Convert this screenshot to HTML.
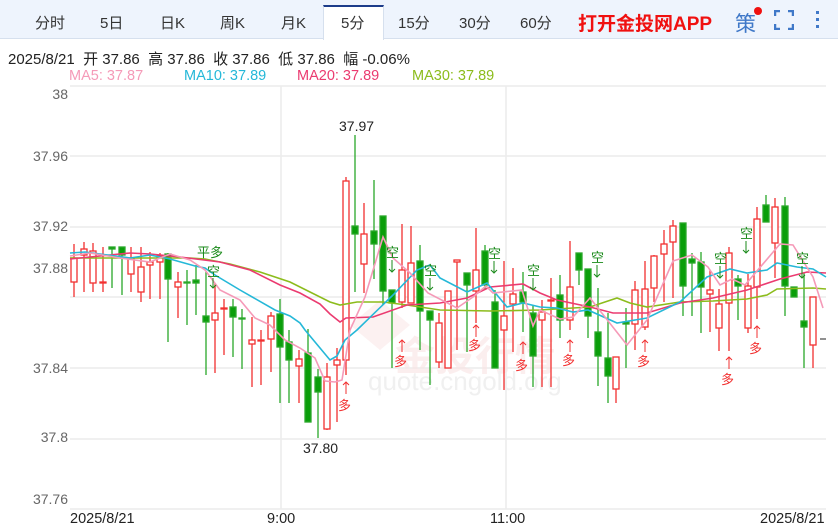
<!DOCTYPE html>
<html><head><meta charset="utf-8"><style>
*{margin:0;padding:0;box-sizing:border-box}
body{width:838px;height:529px;overflow:hidden;background:#fff;font-family:"Liberation Sans","Noto Sans CJK SC",sans-serif;position:relative}
.bar{position:absolute;left:0;top:0;width:838px;height:39px;background:#eef4fd;border-bottom:1px solid #d6e0ee}
.t{position:absolute;top:12px;font-size:15px;color:#333}
.act{position:absolute;left:323px;top:5px;width:61px;height:35px;background:#fff;border-top:2px solid #1d3c8a;border-left:1px solid #d6e0ee;border-right:1px solid #d6e0ee}
.app{position:absolute;left:578px;top:9px;font-size:19px;font-weight:bold;color:#f01010}
.info{position:absolute;left:8px;top:48px;font-size:15px;color:#222;white-space:pre}
.ma{position:absolute;top:68px;font-size:14.5px}
.yl{position:absolute;left:0;width:68px;text-align:right;font-size:14px;color:#666}
.xl{position:absolute;top:511px;font-size:14.5px;color:#222}
</style></head><body>
<div class="bar"></div>
<div class="act"></div>
<span class="t" style="left:35px">分时</span>
<span class="t" style="left:100px">5日</span>
<span class="t" style="left:160px">日K</span>
<span class="t" style="left:220px">周K</span>
<span class="t" style="left:281px">月K</span>
<span class="t" style="left:341px">5分</span>
<span class="t" style="left:398px">15分</span>
<span class="t" style="left:459px">30分</span>
<span class="t" style="left:520px">60分</span>
<span class="app">打开金投网APP</span>
<span style="position:absolute;left:735px;top:8px;font-size:21px;color:#3f78c8">策</span>
<div style="position:absolute;left:754px;top:7px;width:8px;height:8px;border-radius:50%;background:#f01010"></div>
<svg style="position:absolute;left:774px;top:10px" width="20" height="20"><path d="M1 6V1h5M14 1h5v5M19 14v5h-5M6 19H1v-5" fill="none" stroke="#3f78c8" stroke-width="2.5"/></svg>
<svg style="position:absolute;left:815px;top:10px" width="6" height="20"><rect x="1" y="1" width="3" height="3" fill="#3f78c8"/><rect x="1" y="8" width="3" height="3" fill="#3f78c8"/><rect x="1" y="15" width="3" height="3" fill="#3f78c8"/></svg>
<div class="info">2025/8/21  开 37.86  高 37.86  收 37.86  低 37.86  幅 -0.06%</div>
<span class="ma" style="left:69px;color:#f59ab8">MA5: 37.87</span>
<span class="ma" style="left:184px;color:#25b8d8">MA10: 37.89</span>
<span class="ma" style="left:297px;color:#eb3b70">MA20: 37.89</span>
<span class="ma" style="left:412px;color:#8cbc1c">MA30: 37.89</span>
<div class="yl" style="top:86px">38</div>
<div class="yl" style="top:148px">37.96</div>
<div class="yl" style="top:218px">37.92</div>
<div class="yl" style="top:260px">37.88</div>
<div class="yl" style="top:360px">37.84</div>
<div class="yl" style="top:429px">37.8</div>
<div class="yl" style="top:491px">37.76</div>
<span class="xl" style="left:70px">2025/8/21</span>
<span class="xl" style="left:267px">9:00</span>
<span class="xl" style="left:490px">11:00</span>
<span class="xl" style="left:760px">2025/8/21</span>
<svg style="position:absolute;left:0;top:0" width="838" height="529">
<g stroke="#ececec" stroke-width="1.5">
<line x1="70" y1="86" x2="826" y2="86"/><line x1="70" y1="156" x2="826" y2="156"/><line x1="70" y1="227" x2="826" y2="227"/><line x1="70" y1="297" x2="826" y2="297"/><line x1="70" y1="368" x2="826" y2="368"/><line x1="70" y1="439" x2="826" y2="439"/><line x1="70" y1="509" x2="826" y2="509"/>
<line x1="281" y1="86" x2="281" y2="509"/><line x1="506" y1="86" x2="506" y2="509"/>
</g>
<g fill="#f9e4e4" opacity="0.6" font-size="40" font-weight="bold"><text x="395" y="370">金投行情</text></g>
<path d="M350 325l30 -25 30 25 -30 25z" fill="#f9e4e4" opacity="0.5"/>
<text x="368" y="390" font-size="26" fill="#f0f0f0">quote.cngold.org</text>
<g stroke="#f23030" stroke-width="1.3" fill="#fff">
<line x1="74" y1="244" x2="74" y2="297"/><rect x="71" y="258" width="6" height="24"/>
<line x1="84" y1="242" x2="84" y2="292"/><rect x="81" y="249" width="6" height="6"/>
<line x1="93" y1="243" x2="93" y2="292"/><rect x="90" y="251" width="6" height="32"/>
<line x1="103" y1="247" x2="103" y2="292"/><rect x="100" y="282" width="6" height="1"/>
<line x1="131" y1="247" x2="131" y2="292"/><rect x="128" y="258" width="6" height="16"/>
<line x1="141" y1="247" x2="141" y2="302"/><rect x="138" y="267" width="6" height="25"/>
<line x1="150" y1="252" x2="150" y2="299"/><rect x="147" y="262" width="6" height="3"/>
<line x1="160" y1="253" x2="160" y2="299"/><rect x="157" y="256" width="6" height="6"/>
<line x1="178" y1="272" x2="178" y2="318"/><rect x="175" y="282" width="6" height="5"/>
<line x1="215" y1="283" x2="215" y2="373"/><rect x="212" y="313" width="6" height="7"/>
<line x1="224" y1="299" x2="224" y2="355"/><rect x="221" y="308" width="6" height="1"/>
<line x1="252" y1="317" x2="252" y2="387"/><rect x="249" y="340" width="6" height="4"/>
<line x1="261" y1="330" x2="261" y2="385"/><rect x="258" y="340" width="6" height="1"/>
<line x1="271" y1="312" x2="271" y2="372"/><rect x="268" y="316" width="6" height="23"/>
<line x1="299" y1="350" x2="299" y2="403"/><rect x="296" y="359" width="6" height="7"/>
<line x1="327" y1="363" x2="327" y2="430"/><rect x="324" y="377" width="6" height="52"/>
<line x1="337" y1="348" x2="337" y2="422"/><rect x="334" y="360" width="6" height="5"/>
<line x1="346" y1="177" x2="346" y2="375"/><rect x="343" y="181" width="6" height="179"/>
<line x1="364" y1="203" x2="364" y2="293"/><rect x="361" y="234" width="6" height="30"/>
<line x1="402" y1="224" x2="402" y2="308"/><rect x="399" y="270" width="6" height="32"/>
<line x1="411" y1="226" x2="411" y2="303"/><rect x="408" y="263" width="6" height="40"/>
<line x1="439" y1="313" x2="439" y2="368"/><rect x="436" y="323" width="6" height="39"/>
<line x1="448" y1="291" x2="448" y2="368"/><rect x="445" y="291" width="6" height="77"/>
<line x1="457" y1="260" x2="457" y2="350"/><rect x="454" y="260" width="6" height="2"/>
<line x1="476" y1="228" x2="476" y2="323"/><rect x="473" y="270" width="6" height="21"/>
<line x1="504" y1="261" x2="504" y2="390"/><rect x="501" y="316" width="6" height="14"/>
<line x1="513" y1="268" x2="513" y2="352"/><rect x="510" y="294" width="6" height="10"/>
<line x1="542" y1="300" x2="542" y2="387"/><rect x="539" y="312" width="6" height="8"/>
<line x1="551" y1="278" x2="551" y2="387"/><rect x="548" y="300" width="6" height="1"/>
<line x1="570" y1="241" x2="570" y2="330"/><rect x="567" y="287" width="6" height="33"/>
<line x1="616" y1="357" x2="616" y2="403"/><rect x="613" y="357" width="6" height="32"/>
<line x1="635" y1="281" x2="635" y2="350"/><rect x="632" y="290" width="6" height="34"/>
<line x1="645" y1="261" x2="645" y2="330"/><rect x="642" y="289" width="6" height="38"/>
<line x1="654" y1="255" x2="654" y2="302"/><rect x="651" y="256" width="6" height="32"/>
<line x1="664" y1="230" x2="664" y2="302"/><rect x="661" y="244" width="6" height="10"/>
<line x1="673" y1="220" x2="673" y2="298"/><rect x="670" y="226" width="6" height="16"/>
<line x1="710" y1="270" x2="710" y2="332"/><rect x="707" y="290" width="6" height="4"/>
<line x1="719" y1="289" x2="719" y2="351"/><rect x="716" y="304" width="6" height="24"/>
<line x1="729" y1="247" x2="729" y2="351"/><rect x="726" y="253" width="6" height="50"/>
<line x1="748" y1="274" x2="748" y2="333"/><rect x="745" y="286" width="6" height="42"/>
<line x1="757" y1="207" x2="757" y2="319"/><rect x="754" y="219" width="6" height="68"/>
<line x1="775" y1="198" x2="775" y2="278"/><rect x="772" y="207" width="6" height="36"/>
<line x1="813" y1="297" x2="813" y2="368"/><rect x="810" y="297" width="6" height="48"/>
</g>
<g stroke="#2aa82a" stroke-width="1.3" fill="#0a9e0a">
<line x1="112" y1="247" x2="112" y2="288"/><rect x="109" y="247" width="6" height="2"/>
<line x1="122" y1="247" x2="122" y2="295"/><rect x="119" y="247" width="6" height="8"/>
<line x1="168" y1="253" x2="168" y2="342"/><rect x="165" y="254" width="6" height="25"/>
<line x1="187" y1="270" x2="187" y2="325"/><rect x="184" y="282" width="6" height="1"/>
<line x1="196" y1="265" x2="196" y2="315"/><rect x="193" y="280" width="6" height="3"/>
<line x1="206" y1="272" x2="206" y2="375"/><rect x="203" y="316" width="6" height="6"/>
<line x1="233" y1="299" x2="233" y2="357"/><rect x="230" y="307" width="6" height="10"/>
<line x1="242" y1="309" x2="242" y2="369"/><rect x="239" y="318" width="6" height="1"/>
<line x1="280" y1="299" x2="280" y2="403"/><rect x="277" y="314" width="6" height="33"/>
<line x1="289" y1="330" x2="289" y2="403"/><rect x="286" y="342" width="6" height="18"/>
<line x1="308" y1="329" x2="308" y2="422"/><rect x="305" y="353" width="6" height="69"/>
<line x1="318" y1="369" x2="318" y2="438"/><rect x="315" y="377" width="6" height="15"/>
<line x1="355" y1="135" x2="355" y2="292"/><rect x="352" y="226" width="6" height="8"/>
<line x1="374" y1="180" x2="374" y2="279"/><rect x="371" y="231" width="6" height="13"/>
<line x1="383" y1="216" x2="383" y2="305"/><rect x="380" y="216" width="6" height="75"/>
<line x1="392" y1="290" x2="392" y2="368"/><rect x="389" y="290" width="6" height="13"/>
<line x1="420" y1="245" x2="420" y2="350"/><rect x="417" y="261" width="6" height="50"/>
<line x1="430" y1="311" x2="430" y2="385"/><rect x="427" y="311" width="6" height="9"/>
<line x1="467" y1="273" x2="467" y2="352"/><rect x="464" y="273" width="6" height="12"/>
<line x1="485" y1="245" x2="485" y2="290"/><rect x="482" y="251" width="6" height="34"/>
<line x1="495" y1="290" x2="495" y2="368"/><rect x="492" y="302" width="6" height="66"/>
<line x1="523" y1="272" x2="523" y2="332"/><rect x="520" y="292" width="6" height="10"/>
<line x1="533" y1="305" x2="533" y2="387"/><rect x="530" y="313" width="6" height="43"/>
<line x1="560" y1="275" x2="560" y2="338"/><rect x="557" y="295" width="6" height="25"/>
<line x1="579" y1="253" x2="579" y2="285"/><rect x="576" y="253" width="6" height="17"/>
<line x1="588" y1="269" x2="588" y2="338"/><rect x="585" y="269" width="6" height="47"/>
<line x1="598" y1="288" x2="598" y2="386"/><rect x="595" y="332" width="6" height="24"/>
<line x1="608" y1="313" x2="608" y2="403"/><rect x="605" y="358" width="6" height="18"/>
<line x1="626" y1="308" x2="626" y2="368"/><rect x="623" y="322" width="6" height="2"/>
<line x1="683" y1="223" x2="683" y2="316"/><rect x="680" y="223" width="6" height="63"/>
<line x1="692" y1="253" x2="692" y2="316"/><rect x="689" y="259" width="6" height="4"/>
<line x1="701" y1="252" x2="701" y2="333"/><rect x="698" y="262" width="6" height="25"/>
<line x1="738" y1="275" x2="738" y2="320"/><rect x="735" y="279" width="6" height="7"/>
<line x1="766" y1="195" x2="766" y2="222"/><rect x="763" y="205" width="6" height="17"/>
<line x1="785" y1="197" x2="785" y2="316"/><rect x="782" y="206" width="6" height="80"/>
<line x1="794" y1="287" x2="794" y2="297"/><rect x="791" y="287" width="6" height="10"/>
<line x1="804" y1="273" x2="804" y2="368"/><rect x="801" y="321" width="6" height="6"/>
</g>
<line x1="820" y1="339" x2="826" y2="339" stroke="#222"/>
<g fill="none" stroke-width="1.6">
<polyline stroke="#8cbc1c" points="70,258 130,258 190,258 205,259 230,264 260,272 290,282 330,302 340,305 357,302 383,302 407,305 440,310 490,311 540,310 573,308 590,307 617,298 630,303 647,307 680,302 713,301 747,299 767,295 777,289 813,288 826,289"/>
<polyline stroke="#eb3b70" points="70,259 100,256 130,253 150,254 180,257 220,262 250,270 280,285 300,293 320,304 330,314 340,322 346,318 373,317 407,305 440,303 467,298 490,287 523,284 540,293 557,300 590,307 613,313 647,313 680,303 713,298 747,290 780,279 807,272 826,273"/>
<polyline stroke="#25b8d8" points="70,253 85,252 100,254 130,258 150,255 170,259 195,266 205,268 215,275 240,290 275,310 290,316 300,323 305,330 330,360 337,356 345,340 357,330 393,295 417,270 430,265 440,278 467,292 487,283 507,307 523,303 540,307 557,308 573,312 588,310 617,323 647,318 680,302 707,277 730,269 747,273 767,270 777,263 797,267 813,269 826,277"/>
<polyline stroke="#f59ab8" points="70,256 90,253 120,258 150,262 170,254 190,260 205,270 220,290 240,300 255,318 270,325 285,340 300,348 315,358 325,381 335,382 342,380 350,330 365,297 383,237 393,258 410,273 428,293 457,308 473,297 486,286 493,293 522,290 533,326 540,310 560,319 573,317 590,298 627,345 647,320 673,261 692,255 708,267 720,285 732,279 745,285 780,244 793,245 813,277 823,308"/>
</g>
<g font-size="13" fill="#1a8a1a" font-family="Liberation Sans,Noto Sans CJK SC,sans-serif">
<text x="197" y="257">平多</text>
<text x="207" y="276">空</text><text x="386" y="257">空</text><text x="424" y="275">空</text><text x="488" y="258">空</text><text x="527" y="275">空</text><text x="591" y="262">空</text><text x="714" y="263">空</text><text x="740" y="238">空</text><text x="796" y="263">空</text>
</g>
<g stroke="#1a8a1a" fill="none" stroke-width="1">
<path d="M213 278v10M210 285l3 3 3-3M392 260v12M389 269l3 3 3-3M430 278v12M427 287l3 3 3-3M494 261v12M491 270l3 3 3-3M533 278v12M530 287l3 3 3-3M597 265v12M594 274l3 3 3-3M720 266v12M717 275l3 3 3-3M746 241v12M743 250l3 3 3-3M802 266v12M799 275l3 3 3-3"/>
</g>
<g stroke="#f23030" fill="none" stroke-width="1">
<path d="M346 382v12M343 385l3-3 3 3M402 340v12M399 343l3-3 3 3M476 325v12M473 328l3-3 3 3M523 342v12M520 345l3-3 3 3M570 340v12M567 343l3-3 3 3M645 340v12M642 343l3-3 3 3M729 357v12M726 360l3-3 3 3M757 326v12M754 329l3-3 3 3"/>
</g>
<g font-size="13" fill="#f23030" font-family="Liberation Sans,Noto Sans CJK SC,sans-serif">
<text x="338" y="410">多</text><text x="394" y="366">多</text><text x="468" y="350">多</text><text x="515" y="370">多</text><text x="562" y="365">多</text><text x="637" y="366">多</text><text x="721" y="384">多</text><text x="749" y="353">多</text>
</g>
<g font-size="14" fill="#222" font-family="Liberation Sans,sans-serif">
<text x="339" y="131">37.97</text><text x="303" y="453">37.80</text>
</g>
</svg>
</body></html>
